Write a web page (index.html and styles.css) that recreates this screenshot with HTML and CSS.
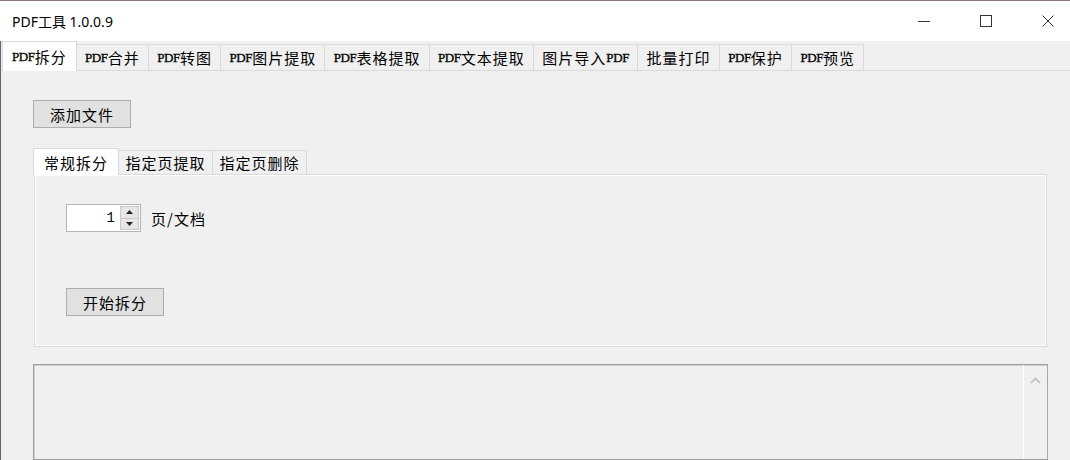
FILE: index.html
```html
<!DOCTYPE html>
<html>
<head>
	<meta charset="utf-8">
	<title>PDF工具 1.0.0.9</title>
	<link rel="stylesheet" href="styles.css">
</head>
<body>
	<div class="window">
		<div class="titlebar">
			<span class="title">PDF工具 1.0.0.9</span>
			<div class="caption">
				<span class="cap-btn">
					<svg width="12" height="12" viewBox="0 0 12 12"><path d="M0 6.5h12" stroke="#333" stroke-width="1"/></svg>
				</span>
				<span class="cap-btn">
					<svg width="12" height="12" viewBox="0 0 12 12"><rect x="0.5" y="0.5" width="11" height="11" fill="none" stroke="#333" stroke-width="1"/></svg>
				</span>
				<span class="cap-btn">
					<svg width="12" height="12" viewBox="0 0 12 12"><path d="M0.5 0.5L11.5 11.5M11.5 0.5L0.5 11.5" stroke="#333" stroke-width="1"/></svg>
				</span>
			</div>
		</div>
		<div class="client">
			<div class="tabs">
				<span class="tab active"><span class="en">PDF</span>拆分</span>
				<span class="tab"><span class="en">PDF</span>合并</span>
				<span class="tab"><span class="en">PDF</span>转图</span>
				<span class="tab"><span class="en">PDF</span>图片提取</span>
				<span class="tab"><span class="en">PDF</span>表格提取</span>
				<span class="tab"><span class="en">PDF</span>文本提取</span>
				<span class="tab">图片导入<span class="en">PDF</span></span>
				<span class="tab">批量打印</span>
				<span class="tab"><span class="en">PDF</span>保护</span>
				<span class="tab"><span class="en">PDF</span>预览</span>
			</div>
			<div class="page">
				<div><button class="btn">添加文件</button></div>
				<div class="subtabs">
					<span class="subtab active">常规拆分</span>
					<span class="subtab">指定页提取</span>
					<span class="subtab">指定页删除</span>
				</div>
				<div class="subpage">
					<div class="row">
						<div class="spin">
							<span class="spin-val">1</span>
							<div class="spin-btns">
								<span class="arrow"><svg width="7" height="4" viewBox="0 0 7 4"><path d="M0 4L3.5 0L7 4z" fill="#222"/></svg></span>
								<span class="arrow"><svg width="7" height="4" viewBox="0 0 7 4"><path d="M0 0L3.5 4L7 0z" fill="#222"/></svg></span>
							</div>
						</div>
						<span class="label">页/文档</span>
					</div>
					<div><button class="btn start">开始拆分</button></div>
				</div>
				<div class="log">
					<div class="scroll">
						<svg width="11" height="7" viewBox="0 0 11 7"><path d="M1 6L5.5 1.5L10 6" fill="none" stroke="#bdbdbd" stroke-width="1.6"/></svg>
					</div>
				</div>
			</div>
		</div>
	</div>
</body>
</html>
```

FILE: styles.css
```css
*{
	box-sizing: border-box;
}
html, body{
	margin: 0;
	padding: 0;
	width: 1070px;
	height: 460px;
	overflow: hidden;
	background-color: #f0f0f0;
	font-family: "Noto Sans", "Noto Sans CJK SC", sans-serif;
	color: #000;
}
.window{
	width: 1070px;
	height: 460px;
	display: flex;
	flex-direction: column;
	overflow: hidden;
}
.titlebar{
	height: 41px;
	flex: none;
	background-color: #fff;
	border-top: 1px solid #8a7878;
	display: flex;
	align-items: center;
	justify-content: space-between;
}
.title{
	padding-left: 12px;
	font-size: 14px;
	margin-top: -1px;
}
.caption{
	display: flex;
	height: 100%;
	align-items: center;
	margin-top: -1px;
	margin-right: -9px;
}
.cap-btn{
	width: 62px;
	display: flex;
	justify-content: center;
}
.cap-btn svg{
	display: block;
}
.client{
	flex: 1;
	display: flex;
	flex-direction: column;
	border-left: 1px solid #5b6375;
	min-height: 0;
}
.tabs{
	display: flex;
	align-items: flex-end;
	height: 29px;
	padding-left: 2px;
	flex: none;
	position: relative;
	z-index: 1;
}
.tab{
	height: 26px;
	padding: 0 8.3px;
	display: flex;
	align-items: center;
	font-family: "Noto Sans CJK SC", sans-serif;
	font-size: 15px;
	letter-spacing: 1px;
	background-color: #f0f0f0;
	border: 1px solid #d9d9d9;
	border-bottom: none;
	margin-left: -1px;
	white-space: nowrap;
}
.tab.active{
	height: 30px;
	background-color: #fff;
	margin-bottom: -1px;
	padding: 0 9px;
}
.en{
	font-family: "Liberation Serif", serif;
	font-size: 13px;
	letter-spacing: -0.4px;
	-webkit-text-stroke: 0.3px #000;
}
.page{
	flex: 1;
	border-top: 1px solid #dadada;
	padding: 29px 23px 0 32px;
	display: flex;
	flex-direction: column;
}
.btn{
	width: 98px;
	height: 28px;
	background-color: #e1e1e1;
	border: 1px solid #adadad;
	font-family: "Noto Sans CJK SC", sans-serif;
	font-size: 15px;
	letter-spacing: 1px;
	padding: 0;
	margin: 0;
	color: #000;
}
.subtabs{
	display: flex;
	align-items: flex-end;
	height: 26px;
	margin-top: 20px;
	padding-left: 1px;
	position: relative;
	z-index: 1;
}
.subtab{
	height: 24px;
	padding: 0 6.5px;
	display: flex;
	align-items: center;
	font-family: "Noto Sans CJK SC", sans-serif;
	font-size: 15px;
	letter-spacing: 1px;
	background-color: #f0f0f0;
	border: 1px solid #d9d9d9;
	border-bottom: none;
	margin-left: -1px;
}
.subtab.active{
	height: 27px;
	background-color: #fff;
	margin-bottom: -1px;
	padding: 0 10px;
}
.subpage{
	margin-left: 1px;
	height: 173px;
	border: 1px solid #dadada;
	box-shadow: inset 0 0 0 1px #fff;
	padding: 29px 0 0 31px;
	display: flex;
	flex-direction: column;
}
.row{
	display: flex;
	align-items: center;
	gap: 10px;
}
.spin{
	width: 75px;
	height: 28px;
	background-color: #fff;
	border: 1px solid #b5b5b5;
	display: flex;
	align-items: center;
	justify-content: flex-end;
	padding-right: 1px;
}
.spin-val{
	font-family: "Liberation Mono", monospace;
	font-size: 14px;
	padding-right: 5px;
}
.spin-btns{
	width: 19px;
	height: 24px;
	display: flex;
	flex-direction: column;
	border: 1px solid #c8c8c8;
	background-color: #e6e6e6;
}
.arrow{
	flex: 1;
	display: flex;
	align-items: center;
	justify-content: center;
}
.arrow + .arrow{
	border-top: 1px solid #c8c8c8;
}
.arrow svg{
	display: block;
}
.label{
	font-family: "Noto Sans CJK SC", sans-serif;
	font-size: 15px;
	letter-spacing: 1px;
}
.start{
	margin-top: 56px;
}
.log{
	margin-top: 17px;
	margin-right: -1px;
	flex: 1;
	border: 1px solid #9e9e9e;
	border-right-color: #a8a8a8;
	box-shadow: inset 1px 1px 0 #d0d0d0;
	display: flex;
	justify-content: flex-end;
}
.scroll{
	width: 24px;
	border-left: 1px solid #fff;
	display: flex;
	justify-content: center;
	padding-top: 12px;
}
.scroll svg{
	display: block;
}
```
